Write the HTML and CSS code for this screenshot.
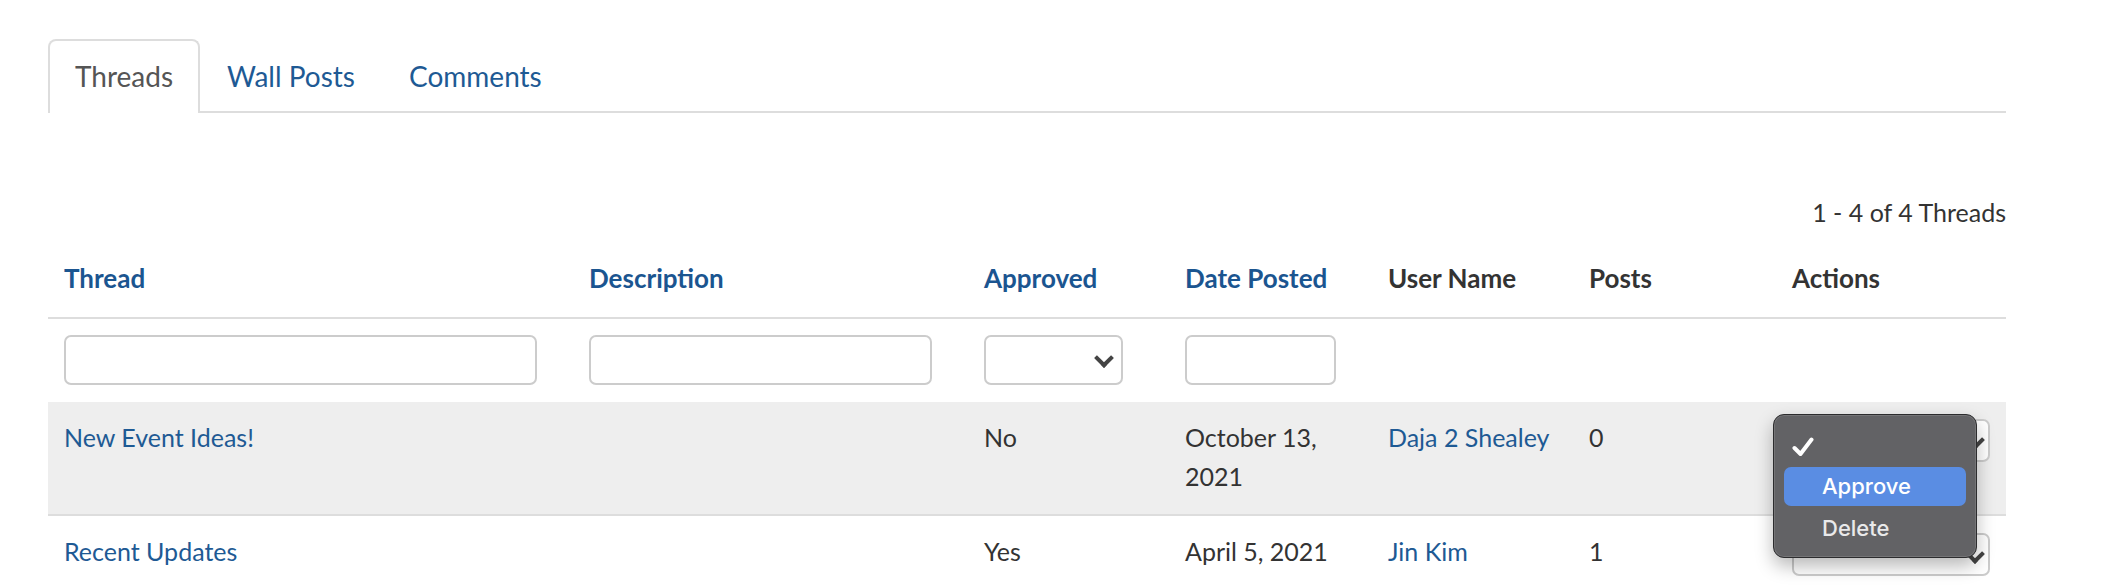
FILE: index.html
```html
<!DOCTYPE html>
<html>
<head>
<meta charset="utf-8">
<link rel="stylesheet" href="styles.css">
</head>
<body>
<div class="page">
  <ul class="tabs">
    <li class="tab active">Threads</li>
    <li class="tab">Wall Posts</li>
    <li class="tab">Comments</li>
  </ul>

  <div class="count">1 - 4 of 4 Threads</div>

  <table class="grid">
    <colgroup>
      <col class="c-thread"><col class="c-desc"><col class="c-appr"><col class="c-date"><col class="c-user"><col class="c-posts"><col class="c-actions">
    </colgroup>
    <thead>
      <tr class="head">
        <th class="sort">Thread</th>
        <th class="sort">Description</th>
        <th class="sort">Approved</th>
        <th class="sort">Date Posted</th>
        <th>User Name</th>
        <th>Posts</th>
        <th>Actions</th>
      </tr>
      <tr class="filters">
        <td><div class="field f-thread"></div></td>
        <td><div class="field f-desc"></div></td>
        <td><div class="field select f-appr"><span class="chev"></span></div></td>
        <td><div class="field f-date"></div></td>
        <td></td>
        <td></td>
        <td></td>
      </tr>
    </thead>
    <tbody>
      <tr class="row shaded">
        <td><a class="link">New Event Ideas!</a></td>
        <td></td>
        <td>No</td>
        <td><div class="date">October 13, 2021</div></td>
        <td><a class="link">Daja 2 Shealey</a></td>
        <td>0</td>
        <td class="actions">
          <div class="field select f-act"><span class="chev"></span></div>
          <div class="menu">
            <div class="item checked"><svg class="check" viewBox="0 0 22 20" width="22" height="20"><path d="M2.5 11 L8.5 17 L19.5 2.5" fill="none" stroke="#ffffff" stroke-width="4" stroke-linecap="round" stroke-linejoin="round"/></svg></div>
            <div class="item hl">Approve</div>
            <div class="item last">Delete</div>
          </div>
        </td>
      </tr>
      <tr class="row">
        <td><a class="link">Recent Updates</a></td>
        <td></td>
        <td>Yes</td>
        <td><div class="date">April 5, 2021</div></td>
        <td><a class="link">Jin Kim</a></td>
        <td>1</td>
        <td class="actions">
          <div class="field select f-act"><span class="chev"></span></div>
        </td>
      </tr>
    </tbody>
  </table>
</div>
</body>
</html>
```

FILE: styles.css
```css
html, body {
  margin: 0;
  padding: 0;
  background: #ffffff;
}

body {
  font-family: Lato, "Open Sans", sans-serif;
  color: #333333;
  overflow: hidden;
}

.page {
  width: 1958px;
  margin-left: 48px;
  padding-top: 39px;
}

.tabs {
  list-style: none;
  margin: 0;
  padding: 0;
  display: flex;
  border-bottom: 2px solid #dddddd;
  height: 74px;
  box-sizing: border-box;
}

.tab {
  font-size: 28px;
  color: #1e5a94;
  padding: 0 25px;
  height: 74px;
  line-height: 70px;
  box-sizing: border-box;
  border: 2px solid transparent;
  border-bottom: none;
  border-radius: 8px 8px 0 0;
}

.tab.active {
  color: #555555;
  border-color: #dddddd;
  background: #ffffff;
  position: relative;
}

.count {
  margin-top: 81px;
  text-align: right;
  font-size: 25px;
  line-height: 36px;
  height: 36px;
  color: #333333;
}

.grid {
  width: 1958px;
  border-collapse: collapse;
  table-layout: fixed;
}

.c-thread { width: 525px; }
.c-desc { width: 395px; }
.c-appr { width: 201px; }
.c-date { width: 203px; }
.c-user { width: 201px; }
.c-posts { width: 203px; }
.c-actions { width: 230px; }

.grid th,
.grid td {
  padding: 0 16px;
  text-align: left;
  vertical-align: top;
}

.head th {
  font-size: 26px;
  font-weight: 700;
  line-height: 36px;
  color: #333333;
  padding-top: 30px;
  padding-bottom: 21px;
  border-bottom: 2px solid #dddddd;
}

.head th.sort {
  color: #1b5590;
}

.filters td {
  padding-top: 16px;
  padding-bottom: 17px;
  height: 50px;
}

.field {
  height: 50px;
  box-sizing: border-box;
  border: 2px solid #cccccc;
  border-radius: 7px;
  background: #ffffff;
  position: relative;
}

.f-thread { width: 473px; }
.f-desc { width: 343px; }
.f-appr { width: 139px; }
.f-date { width: 151px; }

.chev {
  position: absolute;
  right: 10px;
  top: 50%;
  width: 10px;
  height: 10px;
  margin-top: -9px;
  border-right: 4px solid #444444;
  border-bottom: 4px solid #444444;
  transform: rotate(45deg);
}

.row td {
  font-size: 25px;
  line-height: 39px;
  padding-top: 16px;
  padding-bottom: 18px;
  border-bottom: 2px solid #dddddd;
  color: #333333;
}

.row:last-child td {
  border-bottom: none;
}

.row.shaded td {
  background: #eeeeee;
}

.link {
  color: #1e5a94;
  text-decoration: none;
}

.date {
  width: 160px;
}

.actions {
  position: relative;
}

.f-act {
  width: 198px;
  height: 43px;
  margin-top: 1px;
}

.f-act .chev {
  right: 6px;
  margin-top: -8px;
}

.menu {
  position: absolute;
  z-index: 5;
  left: -3px;
  top: 12px;
  width: 204px;
  height: 144px;
  box-sizing: border-box;
  padding: 13px 10px 0 10px;
  background: #626265;
  border: 1px solid #2c2c2e;
  border-radius: 11px;
  box-shadow: inset 0 0 0 1px rgba(255, 255, 255, 0.12), 0 8px 18px rgba(0, 0, 0, 0.28);
  font-family: Inter, "Noto Sans", sans-serif;
  font-size: 22px;
  font-weight: 500;
  color: #e9e9ea;
}

.item {
  height: 39px;
  line-height: 39px;
  padding-left: 38px;
  border-radius: 7px;
  position: relative;
}

.item.last {
  margin-top: 3px;
}

.item.hl {
  background: #5a8de3;
  color: #ffffff;
}

.check {
  position: absolute;
  left: 8px;
  top: 9px;
}
```
